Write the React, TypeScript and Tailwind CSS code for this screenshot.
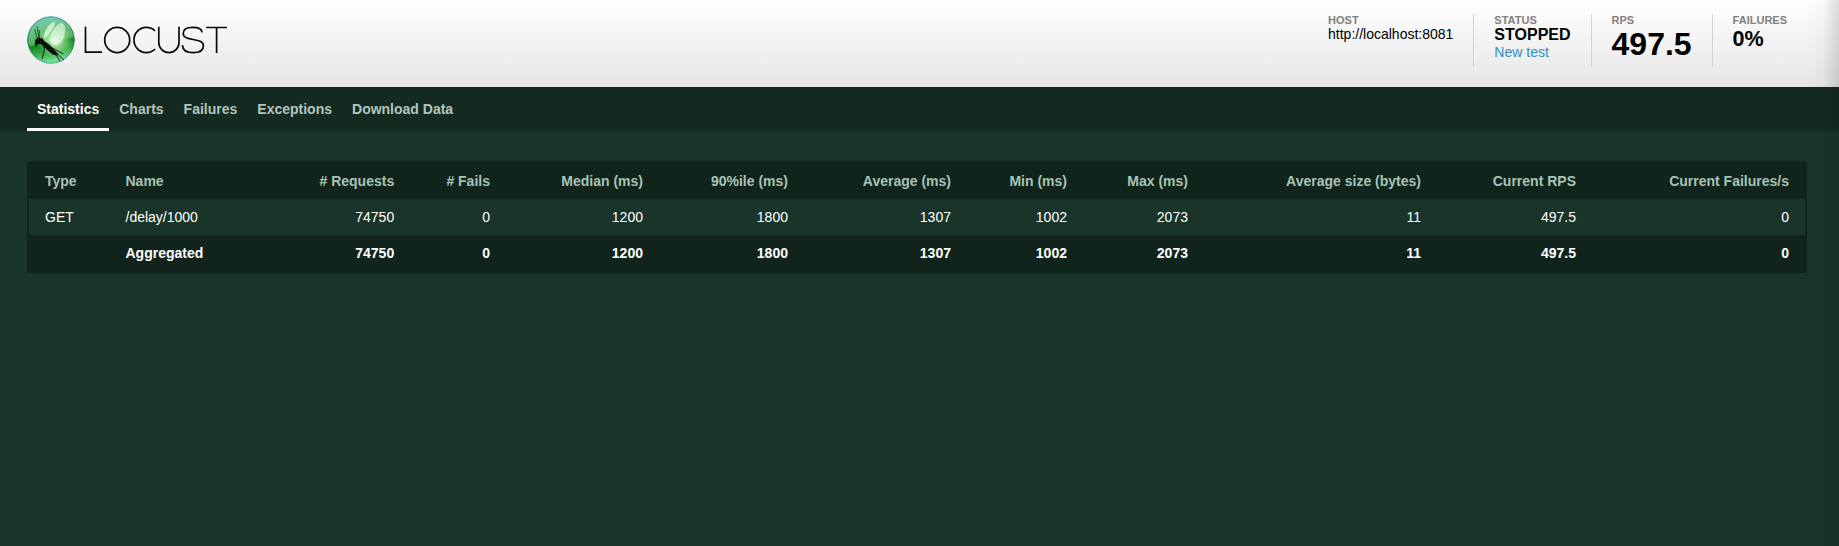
import React from "react";

const tabs = ["Statistics", "Charts", "Failures", "Exceptions", "Download Data"];

const columns = [
  { label: "Type", width: "w-[80.5px]" },
  { label: "Name", width: "w-[167.9px]" },
  { label: "# Requests", width: "w-[132.8px]" },
  { label: "# Fails", width: "w-[95.8px]" },
  { label: "Median (ms)", width: "w-[153px]" },
  { label: "90%ile (ms)", width: "w-[145px]" },
  { label: "Average (ms)", width: "w-[163px]" },
  { label: "Min (ms)", width: "w-[116px]" },
  { label: "Max (ms)", width: "w-[121px]" },
  { label: "Average size (bytes)", width: "w-[233px]" },
  { label: "Current RPS", width: "w-[155px]" },
  { label: "Current Failures/s", width: "w-[213px]" },
];

const request = ["GET", "/delay/1000", "74750", "0", "1200", "1800", "1307", "1002", "2073", "11", "497.5", "0"];
const total = ["", "Aggregated", "74750", "0", "1200", "1800", "1307", "1002", "2073", "11", "497.5", "0"];

function Logo() {
  return (
    <svg width="202" height="50" viewBox="0 0 202 50" aria-label="Locust">
      <defs>
        <linearGradient id="orb" x1="0.1" y1="0" x2="0.3" y2="1">
          <stop offset="0" stopColor="#74cccb" />
          <stop offset="0.25" stopColor="#6cc68c" />
          <stop offset="0.55" stopColor="#55b65c" />
          <stop offset="0.63" stopColor="#168622" />
          <stop offset="0.8" stopColor="#36a844" />
          <stop offset="1" stopColor="#74e094" />
        </linearGradient>
        <radialGradient id="glow" cx="0.5" cy="0.5" r="0.5">
          <stop offset="0" stopColor="#e2fdd8" stopOpacity="0.95" />
          <stop offset="0.5" stopColor="#b8f0a6" stopOpacity="0.6" />
          <stop offset="1" stopColor="#8ada80" stopOpacity="0" />
        </radialGradient>
        <linearGradient id="rim" x1="0" y1="0" x2="0" y2="1">
          <stop offset="0" stopColor="#3f979c" />
          <stop offset="0.5" stopColor="#17653a" />
          <stop offset="1" stopColor="#45b09c" />
        </linearGradient>
      </defs>
      <circle cx="24" cy="24" r="23.2" fill="url(#orb)" stroke="url(#rim)" strokeWidth="1" />
      <ellipse cx="28" cy="25" rx="18" ry="17" fill="url(#glow)" />
      <path d="M16.5 20.5C18 14 23 7 26.5 5.8c2.4-.2 1.6 3.4-.8 7L18.5 22z" fill="#f0fff2" fillOpacity="0.7" />
      <path d="M22 25C24 14 31 6.5 35 7c5 2 3.6 14-.6 19.4-3.4 4.2-8.4 3.6-12.4-1.400z" fill="#f0fff2" fillOpacity="0.6" />
      <path d="M7.8 24.2l3-2.5 4.200.3 2.600 3.200 4.900 3.500 8.500 9-1 2-4.500-1.200-7-6-4.700-4.600-3.200.3-1 2-1.400-.4z" fill="#0b120d" />
      <g stroke="#0b120d" fill="none" strokeWidth="0.6">
        <path d="M10.400 23L7.600 13M12 22L10 10.500M12.400 22L12.200 14" />
        <path d="M16 28l1.400 5-2.200 10M27 36l6 9M28 36l9 8M23.500 31l13 7" strokeWidth="0.9" />
      </g>
      <g stroke="#0a0a0a" fill="none" strokeWidth="1.7">
        <path d="M58.500 10.800V36.200H75M179.200 11.500H200M189.600 11.500V37" />
        <ellipse cx="90.200" cy="24" rx="12.500" ry="12.600" />
        <path d="M128 14.800A12.500 12.600 0 1 0 128 33.200M131.800 10.800V26.500a10 10 0 0 0 20.200 0V10.800M175 16.500c0-3.300-4-5.100-9.400-5.100-5.800 0-9.400 2.300-9.400 6.100 0 8.500 20.200 3.500 20.200 12.200 0 4.400-3.800 7-10.200 7-6.600 0-10.500-2.600-10.800-7.600" />
      </g>
    </svg>
  );
}

function Stat({ label, children, last = false }: { label: string; children: React.ReactNode; last?: boolean }) {
  return (
    <div className={last ? "h-[53px] w-[74.4px] pl-5" : "h-[53px] border-r border-[#d2d2d2] px-5"}>
      <div className="pt-px text-[11px] leading-[11px] font-bold text-[#808080]">{label}</div>
      {children}
    </div>
  );
}

function Row({ cells, tone }: { cells: string[]; tone: string }) {
  return (
    <tr className={tone}>
      {cells.map((cell, i) => (
        <td key={i} className={i < 2 ? "pl-4 text-left" : "pr-4 text-right"}>
          {cell}
        </td>
      ))}
    </tr>
  );
}

export default function App() {
  return (
    <div className="relative h-[546px] w-full overflow-hidden bg-[#193529] font-['Liberation_Sans',Arial,sans-serif] text-sm">
      <header className="flex h-[87px] justify-between bg-linear-to-b from-white to-[#e6e6e6] pt-[14px] pr-[52px] pl-[27px]">
        <div className="pt-[2px]">
          <Logo />
        </div>
        <div className="flex text-black">
          <Stat label="HOST">
            <div className="leading-[17px]">http://localhost:8081</div>
          </Stat>
          <Stat label="STATUS">
            <div className="text-base leading-[18px] font-bold">STOPPED</div>
            <a className="block leading-[17px] text-[#328ec4]">New test</a>
          </Stat>
          <Stat label="RPS">
            <div className="text-[32px] leading-[37px] font-bold">497.5</div>
          </Stat>
          <Stat label="FAILURES" last>
            <div className="text-[21.5px] leading-[26px] font-bold">0%</div>
          </Stat>
        </div>
      </header>
      <nav className="flex h-11 bg-[#142a20] pl-[27px] font-bold">
        {tabs.map((tab, i) => (
          <a
            key={tab}
            className={
              i === 0
                ? "border-b-[3px] border-white px-[10px] pt-[12px] leading-5 text-white"
                : "px-[10px] pt-[12px] leading-5 text-[#b4c4bc]"
            }
          >
            {tab}
          </a>
        ))}
      </nav>
      <main className="px-[27px] pt-[30px]">
        <div className="h-28 w-[1780px] rounded-[3px] border-2 border-[#11241b] bg-[#11241b]">
          <table className="w-[1776px] table-fixed border-collapse">
            <thead>
              <tr className="h-9 text-[#a6c3b5]">
                {columns.map((c, i) => (
                  <th key={c.label} className={`${c.width} ${i < 2 ? "pl-4 text-left" : "pr-4 text-right"}`}>
                    {c.label}
                  </th>
                ))}
              </tr>
            </thead>
            <tbody>
              <Row cells={request} tone="h-9 bg-[#193529] text-white" />
              <Row cells={total} tone="h-9 font-bold text-white" />
            </tbody>
          </table>
        </div>
      </main>
      <div className="pointer-events-none absolute inset-y-0 right-0 w-8 bg-linear-to-r from-transparent via-[#001c10]/3 to-[#001c10]/15" />
    </div>
  );
}
